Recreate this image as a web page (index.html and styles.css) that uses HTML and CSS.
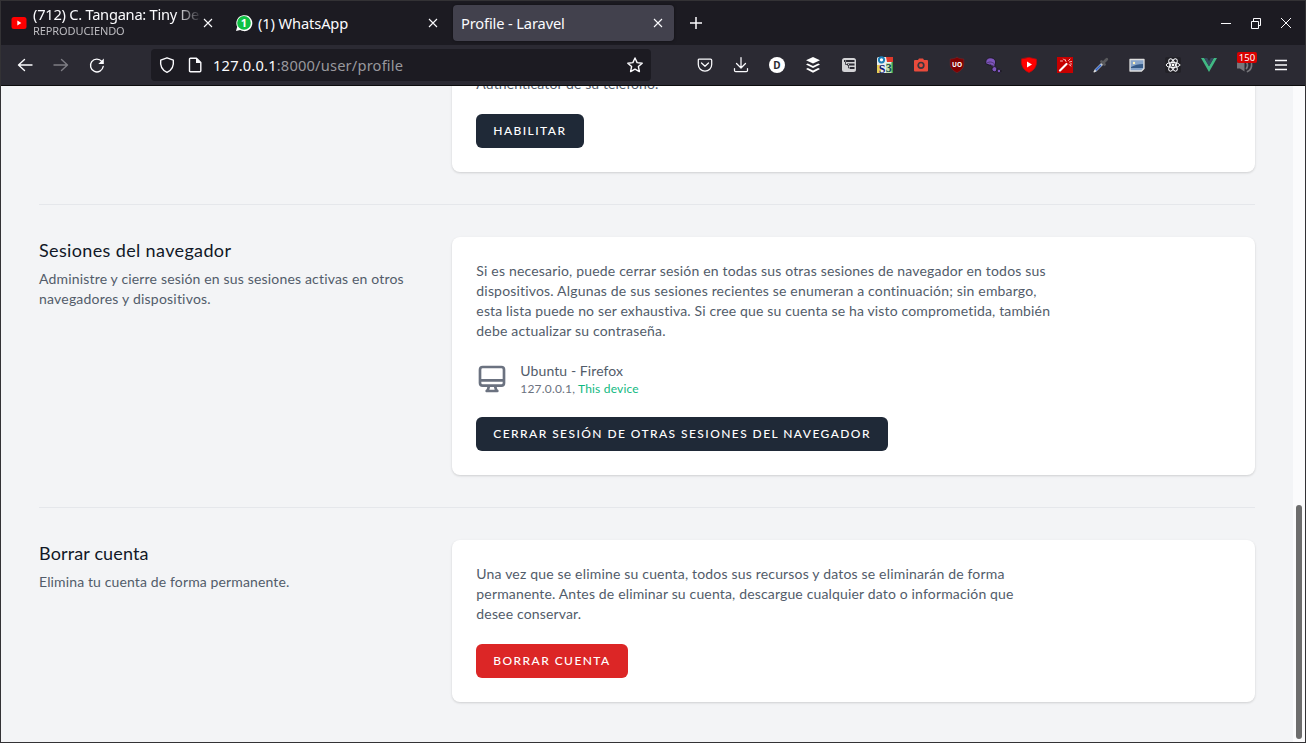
FILE: index.html
```html
<!DOCTYPE html>
<html lang="es">
<head>
<meta charset="utf-8">
<title>Profile - Laravel</title>
<link rel="stylesheet" href="styles.css">
</head>
<body>
<div class="window">
  <header class="tabs">
    <div class="tab tab-first">
      <svg class="yt" width="16" height="14" viewBox="0 0 16 14"><rect x=".5" y="1" width="15" height="12" rx="2.5" fill="#f00"/><path d="M6.3 4.6v4.8L10.4 7z" fill="#fff"/></svg>
      <div class="tab-text"><span class="tab-title t1">(712) C. Tangana: Tiny Des</span><span class="tab-sub">REPRODUCIENDO</span></div>
      <svg class="close" width="10" height="10" viewBox="0 0 10 10"><path d="M1 1l8 8M9 1L1 9"/></svg>
    </div>
    <div class="tab tab-second">
      <svg class="wa" width="18" height="18" viewBox="0 0 18 18"><path d="M1 17l1.2-4.2A8 8 0 1 1 5.2 16z" fill="#fff"/><circle cx="9" cy="8.9" r="6.8" fill="#0fc143"/><text x="9" y="13" text-anchor="middle" class="wa-n">1</text></svg>
      <span class="tab-title t2">(1) WhatsApp</span>
      <svg class="close" width="10" height="10" viewBox="0 0 10 10"><path d="M1 1l8 8M9 1L1 9"/></svg>
    </div>
    <div class="tab tab-active">
      <span class="tab-title t3">Profile - Laravel</span>
      <svg class="close" width="10" height="10" viewBox="0 0 10 10"><path d="M1 1l8 8M9 1L1 9"/></svg>
    </div>
    <svg class="plus" width="14" height="14" viewBox="0 0 14 14"><path d="M7 1v12M1 7h12"/></svg>
    <div class="controls">
      <svg width="12" height="12" viewBox="0 0 12 12"><path d="M1 6.5h10"/></svg>
      <svg width="12" height="12" viewBox="0 0 12 12"><path d="M1.500 4.500h7v7h-7zM3.500 4.500v-3h7v7h-2"/></svg>
      <svg width="12" height="12" viewBox="0 0 12 12"><path d="M1 1l10 10M11 1L1 11"/></svg>
    </div>
  </header>

  <nav class="toolbar">
    <div class="nav-buttons">
      <svg class="ic" viewBox="0 0 16 16"><path d="M15 8H1.500M7.500 2.500L1.500 8l6 5.500"/></svg>
      <svg class="ic dim" viewBox="0 0 16 16"><path d="M1 8h13.500M8.500 2.500l6 5.500-6 5.500"/></svg>
      <svg class="ic" viewBox="0 0 16 16"><path d="M14.200 9.500A6.400 6.400 0 1 1 12.800 4.400"/><path d="M14.800 1.500V7H9.300z" fill="#fbfbfe" stroke="none"/></svg>
    </div>
    <div class="urlbar">
      <svg class="ic" viewBox="0 0 16 16"><path d="M8 .8l6.300 2.400c.7 5.500-1.200 10-6.300 12.200C2.900 13.200 1 8.700 1.700 3.200z"/></svg>
      <svg class="ic page" viewBox="0 0 16 16"><path d="M2.500 2.200q0-1 1-1h6l4.300 4.300v8.300q0 1-1 1H3.500q-1 0-1-1z"/><path d="M9 1l5 5H9z" fill="#fbfbfe" stroke="none"/></svg>
      <span class="url"><b>127.0.0.1</b>:8000/user/profile</span>
      <svg class="ic star" viewBox="0 0 16 16"><path d="M8 1l2.100 4.600 5.100.6-3.800 3.400 1 5L8 12.200l-4.400 2.400 1-5L.8 6.200l5.100-.6z"/></svg>
    </div>
    <div class="extensions">
      <svg class="ic thin" viewBox="0 0 16 16"><path d="M2.500 2h11q1.200 0 1.200 1.200V7.500a6.700 6.700 0 0 1-13.400 0V3.200Q1.300 2 2.500 2zM4.500 6L8 9.300 11.500 6"/></svg>
      <svg class="ic thin" viewBox="0 0 16 16"><path d="M8 .5v10.300M3.500 6.500L8 11l4.500-4.500M1.500 11.500v2q0 1.200 1.200 1.200h10.600q1.200 0 1.200-1.200v-2"/></svg>
      <svg class="ic" viewBox="0 0 16 16"><circle cx="8" cy="8" r="8" fill="#fff" stroke="none"/><text x="8" y="11.600" text-anchor="middle" class="ext-d">D</text></svg>
      <svg class="ic" viewBox="0 0 16 16"><g fill="#fff" stroke="none"><path d="M8 0l7 3.300-7 3.300-7-3.300z"/><path d="M2.800 6.500L8 9l5.200-2.500L15 7.500 8 11 1 7.500zM2.800 11L8 13.500l5.200-2.500 1.800 1-7 3.700L1 12z"/></g></svg>
      <svg class="ic" viewBox="0 0 16 16"><rect x="1" y="1" width="14" height="14" rx="2.500" fill="#d3d3d6" stroke="none"/><g fill="#2b2a33" stroke="none"><path d="M3 3h10.500v2H3zM6 6.500h7.500v2H6zM9 10h4.500v2H9z"/></g><path d="M4.500 5v2.500H6M7.500 8.500V11H9" stroke="#2b2a33" stroke-width=".8"/><path d="M4.500 4h.2M7.500 7.500h.2" stroke="#d3d3d6" stroke-width="1"/></svg>
      <svg class="ic" viewBox="0 0 16 16"><g stroke="none"><rect width="16" height="16" rx="1.500" fill="#e9edf0"/><path d="M9 0h7v5h-6z" fill="#e0392b"/><path d="M0 8h4v8H0z" fill="#e5cd54"/><path d="M9 6h7v10H9z" fill="#c3dfae"/><path d="M14.500 5H16v11h-1.500z" fill="#3d9a44"/><circle cx="4.500" cy="2.800" r="2.600" fill="#fff" stroke="#1b7fb8" stroke-width="2"/><text x="1.800" y="15.500" class="s3s">S</text><text x="8.800" y="15" class="s33">3</text></g></svg>
      <svg class="ic" viewBox="0 0 16 16"><path d="M2 3h3l1-1.500h4L11 3h3q1 0 1 1v9.500q0 1-1 1H2q-1 0-1-1V4q0-1 1-1z" fill="#e94b3c" stroke="none"/><circle cx="8" cy="8.300" r="2.800" stroke="#38363f" stroke-width="1.700"/></svg>
      <svg class="ic" viewBox="0 0 16 16"><path d="M8 .3c2 1.200 4.500 1.700 6.800 1.700v5c0 4.500-3 6.800-6.800 8.700C4.200 13.800 1.200 11.500 1.200 7V2C3.500 2 6 1.500 8 .3z" fill="#800000" stroke="#6e2a2f" stroke-width=".6"/><text x="8" y="10" text-anchor="middle" class="ubo">UO</text></svg>
      <svg class="ic" viewBox="0 0 16 16"><g fill="#7e55bd" stroke="#17151c" stroke-width=".9"><path d="M.8 5.500C.5 2.500 3 .5 6 .8c3 .3 5 2.600 4.500 5.200L9.500 10.500 7.500 9 1.800 7.200z"/><circle cx="9.500" cy="12.200" r="2.600"/><circle cx="14" cy="14" r="1.900"/></g><path d="M1.500 6.500C3.500 4.300 7 4.500 9.500 7L8.700 10 5 7" stroke="#463066" stroke-width=".9"/></svg>
      <svg class="ic" viewBox="0 0 16 16"><path d="M8 .5l7.500 1.700c.6 6-1.200 10.500-7.500 13.300C1.700 12.700-.1 8.200.5 2.200z" fill="#f00" stroke="#b80b0b" stroke-width=".8"/><path d="M6 4.500v6L11 7.500z" fill="#fff" stroke="none"/></svg>
      <svg class="ic" viewBox="0 0 16 16"><rect width="16" height="16" fill="#c60000" stroke="none"/><path d="M3 13.500L9.500 7" stroke="#fff" stroke-width="2.200"/><path d="M9 4.500l-1-2M11.500 3.500L13 2M12.500 5l2-.5M12 7.500l2 1.500M3.500 4h2M6.500 2l.8 1M14 6.500v1" stroke="#fbd1d1" stroke-width=".9"/></svg>
      <svg class="ic" viewBox="0 0 16 16"><path d="M2.500 13.500L9.500 6.500" stroke="#c3ccd6" stroke-width="2.600"/><path d="M3 13l4.500-4.500" stroke="#3264ca" stroke-width="1.700"/><path d="M8.500 4.500l3 3M10.500 5.500l3.300-3.300" stroke="#59595c" stroke-width="2.800"/><path d="M1.200 14.800l1-1" stroke="#ddd"/></svg>
      <svg class="ic" viewBox="0 0 16 16"><path d="M1 2.500h14v9l-2.500 2.500H1z" fill="#88a5ca" stroke="#dedede" stroke-width="1.300"/><path d="M2 10c4-2 7-3 12-3v4H2z" fill="#365b88" stroke="none"/><circle cx="5" cy="6" r="1.200" fill="#fff5be" stroke="none"/></svg>
      <svg class="ic" viewBox="0 0 16 16"><rect width="16" height="16" rx="2" fill="#222127" stroke="none"/><g stroke-width="1"><ellipse cx="8" cy="8" rx="6.800" ry="2.600"/><ellipse cx="8" cy="8" rx="6.800" ry="2.600" transform="rotate(60 8 8)"/><ellipse cx="8" cy="8" rx="6.800" ry="2.600" transform="rotate(120 8 8)"/></g><circle cx="8" cy="8" r="1.400" fill="#fff" stroke="none"/></svg>
      <svg class="ic" viewBox="0 0 16 16"><g stroke="none"><path d="M0 1h3.200L8 9.300 12.800 1H16L8 15z" fill="#41b883"/><path d="M3.200 1h3L8 4.200 9.800 1h3L8 9.300z" fill="#35495e"/></g></svg>
      <div class="speaker"><svg class="ic" viewBox="0 0 16 16"><path d="M0 5.500h3l4.500-3v12L3 11.500H0z" fill="#77767b" stroke="none"/><path d="M9.500 5.500q2 2.500 0 6M10.500 14.500c5-2 5-9 2.500-12" stroke="#77767b" stroke-width="1.700"/></svg><span class="badge">150</span></div>
      <svg class="ic menu" viewBox="0 0 16 16"><path d="M2 3.500h12M2 8h12M2 12.500h12"/></svg>
    </div>
  </nav>

  <div class="viewport">
    <main class="content">
      <section class="section">
        <div class="intro"></div>
        <div class="card">
          <p class="text"><span class="line a1">Authenticator de su teléfono.</span></p>
          <button class="btn b1">HABILITAR</button>
        </div>
      </section>
      <section class="section">
        <div class="intro">
          <h3 class="h1">Sesiones del navegador</h3>
          <p class="text"><span class="line l1">Administre y cierre sesión en sus sesiones activas en otros</span><span class="line l2">navegadores y dispositivos.</span></p>
        </div>
        <div class="card">
          <p class="text"><span class="line c1">Si es necesario, puede cerrar sesión en todas sus otras sesiones de navegador en todos sus</span><span class="line c2">dispositivos. Algunas de sus sesiones recientes se enumeran a continuación; sin embargo,</span><span class="line c3">esta lista puede no ser exhaustiva. Si cree que su cuenta se ha visto comprometida, también</span><span class="line c4">debe actualizar su contraseña.</span></p>
          <div class="session">
            <svg class="monitor" width="32" height="32" viewBox="0 0 24 24"><path d="M9.750 17L9 20l-1 1h8l-1-1-.75-3M3 13h18M5 17h14a2 2 0 002-2V5a2 2 0 00-2-2H5a2 2 0 00-2 2v10a2 2 0 002 2z"/></svg>
            <div class="session-info"><span class="agent">Ubuntu - Firefox</span><span class="ip">127.0.0.1, <span class="current">This device</span></span></div>
          </div>
          <button class="btn b2">CERRAR SESIÓN DE OTRAS SESIONES DEL NAVEGADOR</button>
        </div>
      </section>
      <section class="section">
        <div class="intro">
          <h3 class="h2">Borrar cuenta</h3>
          <p class="text"><span class="line l3">Elimina tu cuenta de forma permanente.</span></p>
        </div>
        <div class="card">
          <p class="text"><span class="line d1">Una vez que se elimine su cuenta, todos sus recursos y datos se eliminarán de forma</span><span class="line d2">permanente. Antes de eliminar su cuenta, descargue cualquier dato o información que</span><span class="line d3">desee conservar.</span></p>
          <button class="btn danger b3">BORRAR CUENTA</button>
        </div>
      </section>
    </main>
    <div class="scrollbar"><div class="thumb"></div></div>
  </div>
</div>
</body>
</html>
```
FILE: styles.css
```css
* { box-sizing: border-box; margin: 0; padding: 0; }
body { width: 1306px; height: 743px; overflow: hidden; font-family: Lato, "Open Sans", sans-serif; }
svg { display: block; flex: none; }
.window { width: 1306px; height: 743px; border: 1px solid #333235; display: flex; flex-direction: column; background: #1c1b22; }

/* Tab strip */
.tabs { height: 44px; flex: none; display: flex; align-items: center; color: #fbfbfe; font: 14.67px/18px "Noto Sans", sans-serif; }
.tab { display: flex; align-items: center; height: 36px; white-space: nowrap; }
.tab-first { width: 227px; padding-left: 10px; }
.yt { margin-right: 6px; }
.tab-text { width: 167px; display: flex; flex-direction: column; margin: -2px 3px 0 0; -webkit-mask-image: linear-gradient(90deg, #000 142px, transparent 169px); mask-image: linear-gradient(90deg, #000 142px, transparent 169px); }
.tab-sub { font-size: 11px; line-height: 15px; color: #bdbcc1; letter-spacing: -.1px; }
.t1 { letter-spacing: -.26px; line-height: 17px; }
.t2 { letter-spacing: -.12px; }
.t3 { letter-spacing: -.14px; }
.tab-second { width: 225px; padding-left: 7px; }
.wa { margin-right: 5px; }
.wa-n { font: bold 11px "Noto Sans", sans-serif; fill: #fff; }
.tab .close { margin-left: auto; }
.tab-first .close { margin-left: 0; }
.tab-second .close { margin-right: 15px; }
.tab-active { width: 221px; padding: 0 11px 0 8px; border-radius: 4px; background: #42414d; box-shadow: 0 0 3px rgba(0,0,0,.5); }
.close path, .plus path, .controls path { fill: none; stroke: #fbfbfe; stroke-width: 1; }
.close path { stroke-width: 1.1; }
.plus { margin-left: 15px; }
.plus path { stroke-width: 1.5; }
.controls { margin-left: auto; margin-right: 13px; display: flex; gap: 18px; }

/* Navigation toolbar */
.toolbar { height: 41px; flex: none; display: flex; align-items: center; background: #2b2a33; border-bottom: 1px solid #0c0c0d; }
.ic { width: 16px; height: 16px; fill: none; stroke: #fbfbfe; stroke-width: 1.4; stroke-linecap: round; stroke-linejoin: round; overflow: visible; }
.thin { stroke-width: 1.25; }
.dim { opacity: .4; }
.nav-buttons { display: flex; gap: 20px; padding-left: 16px; width: 150px; }
.urlbar { width: 500px; height: 32px; border-radius: 4px; background: #1c1b22; display: flex; align-items: center; padding: 0 8px; }
.page { margin: 0 10px 0 12px; }
.url { font: 14.67px/20px "Noto Sans", sans-serif; letter-spacing: .18px; color: #99989d; white-space: nowrap; }
.url b { font-weight: 400; color: #fbfbfe; }
.star { margin-left: auto; }
.extensions { display: flex; gap: 20px; margin-left: 46px; }
.ext-d { font: bold 10px "Noto Sans", sans-serif; fill: #2b2a33; stroke: none; }
.s3s { font: bold 12px "Liberation Serif", serif; fill: #102078; }
.s33 { font: bold 12px "Liberation Serif", serif; fill: #15504f; }
.ubo { font: bold 6.5px "Noto Sans", sans-serif; fill: #fff; stroke: none; }
.speaker { position: relative; }
.badge { position: absolute; left: 0; top: -5px; width: 20px; height: 11px; border-radius: 2px; background: #d90000; color: #fff; font: 9.5px/11px "Noto Sans", sans-serif; text-align: center; }
.menu { stroke-linecap: butt; }

/* Page */
.viewport { flex: 1; min-height: 0; display: flex; background: #f3f4f6; overflow: hidden; }
.content { flex: 1; padding: 0 38px 40px; display: flex; flex-direction: column; justify-content: flex-end; }
.section { display: grid; grid-template-columns: repeat(3, 1fr); gap: 24px; flex: none; }
.section + .section { margin-top: 32px; padding-top: 32px; border-top: 1px solid #e5e7eb; }
.intro h3 { font-size: 18px; line-height: 26px; font-weight: 400; color: #111827; white-space: nowrap; }
.intro .text { margin-top: 6px; }
.card { grid-column: span 2; padding: 24px; background: #fff; border-radius: 8px; box-shadow: 0 1px 3px rgba(0,0,0,.1), 0 1px 2px rgba(0,0,0,.06); }
.text { font-size: 14px; line-height: 20px; color: #525c6a; }
.line { display: block; white-space: nowrap; }
.btn { display: block; height: 34px; margin-top: 20px; padding: 0 17px; border: 0; border-radius: 6px; background: #1f2937; color: #fff; font: 500 12px/34px Lato, sans-serif; letter-spacing: 1.43px; text-align: left; white-space: nowrap; }
.danger { background: #dc2626; }
.b1 { width: 108px; }
.b2 { width: 412px; }
.b3 { width: 152px; }

/* Tracking per line of copy */
.h1 { letter-spacing: .36px; }
.h2 { letter-spacing: .14px; }
.a1 { letter-spacing: .1px; }
.l1 { letter-spacing: .17px; }
.l2 { letter-spacing: .21px; }
.l3 { letter-spacing: .13px; }
.c1 { letter-spacing: .178px; }
.c2 { letter-spacing: .178px; }
.c3 { letter-spacing: .156px; }
.c4 { letter-spacing: .18px; }
.d1 { letter-spacing: .18px; }
.d2 { letter-spacing: .157px; }
.d3 { letter-spacing: .16px; }

.session { display: flex; align-items: center; margin-top: 20px; height: 36px; }
.monitor path { fill: none; stroke: #6b7280; stroke-width: 2; stroke-linecap: round; stroke-linejoin: round; }
.session-info { margin-left: 12px; display: flex; flex-direction: column; white-space: nowrap; }
.agent { font-size: 14px; line-height: 20px; color: #525c6a; letter-spacing: .09px; }
.ip { font-size: 12px; line-height: 16px; color: #6b7280; letter-spacing: .18px; }
.current { color: #10b981; }
.scrollbar { width: 12px; flex: none; background: #fbfbfc; padding: 0 3px 3px; display: flex; align-items: flex-end; }
.thumb { width: 6px; height: 234px; border-radius: 3px; background: #6d6d6d; }
```
